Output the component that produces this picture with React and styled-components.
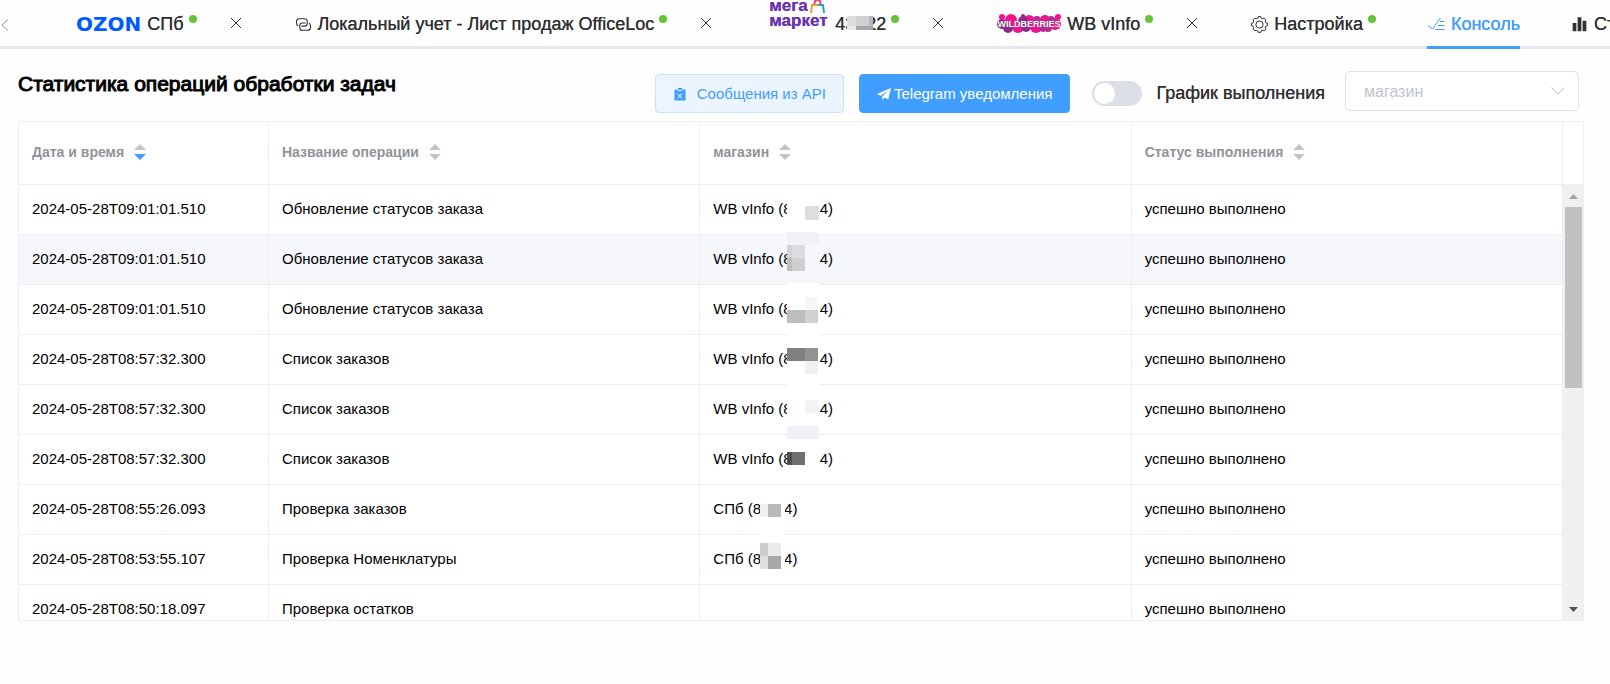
import React from 'react';
import styled, { createGlobalStyle, css } from 'styled-components';

const GlobalStyle = createGlobalStyle`
  *, *::before, *::after { box-sizing: border-box; }
  body {
    margin: 0;
    background: #fefefe;
    color: #000;
    font-family: "Liberation Sans", Arial, sans-serif;
    font-size: 15px;
    overflow-x: hidden;
  }
  button, input, select { font: inherit; }
`;

/* ---------- tabs ---------- */

const TabStrip = styled.nav`
  display: flex;
  align-items: stretch;
  height: 49px;
  background: linear-gradient(to top, #e4e7ed 3px, transparent 3px);
  overflow: hidden;
`;

const ScrollButton = styled.button`
  flex: none;
  display: flex;
  align-items: center;
  width: 25px;
  padding: 0 0 0 1px;
  border: 0;
  background: none;
  color: #909399;
`;

const TabList = styled.div`
  display: flex;
  flex: none;
  gap: 51px;
  padding-left: 51px;
`;

const Tab = styled.div`
  display: flex;
  flex: none;
  align-items: center;
  gap: 31px;
  height: 46px;
`;

const ActiveTab = styled(Tab)`
  height: 49px;
  align-items: flex-start;
  border-bottom: 3px solid #409eff;
`;

const TabButton = styled.button`
  position: relative;
  display: flex;
  align-items: center;
  gap: 6px;
  height: 46px;
  padding: 2px 0 0;
  border: 0;
  background: none;
  color: ${(p) => (p.$active ? '#409eff' : '#303133')};
  font-size: 18px;
  line-height: 24px;
  white-space: nowrap;
  text-shadow: 0 0 0 currentColor;
`;

const StatusDot = styled.span`
  width: 8px;
  height: 8px;
  margin-bottom: 10px;
  margin-left: -1px;
  border-radius: 50%;
  background: #67c23a;
`;

const CloseButton = styled.button`
  display: flex;
  justify-content: center;
  width: 16px;
  padding: 0;
  border: 0;
  background: none;
  color: #303133;
`;

const OzonLogo = styled.span`
  color: #005bff;
  font-family: "DejaVu Sans", sans-serif;
  font-size: 20px;
  font-weight: 700;
  line-height: 24px;
  text-shadow: none;
`;

const MegaLogo = styled.span`
  position: relative;
  align-self: flex-start;
  display: flex;
  flex-direction: column;
  width: 60px;
  margin-left: 4px;
  margin-top: -4px;
  color: #6a33b0;
  font-size: 17px;
  font-weight: 700;
  line-height: 15px;
  text-align: left;
`;

const MegaBag = styled.svg`
  position: absolute;
  top: 2px;
  left: 41px;
`;

/* ---------- toolbar ---------- */

const Content = styled.main`
  padding: 22px 26px 0 18px;
`;

const Toolbar = styled.div`
  display: flex;
  align-items: flex-start;
  min-height: 50px;
  padding-right: 5px;
`;

const Title = styled.h1`
  margin: 0;
  font-size: 21px;
  font-weight: 400;
  line-height: 26px;
  -webkit-text-stroke: 1px #000;
`;

const Actions = styled.div`
  display: flex;
  align-items: center;
  margin-left: auto;
  padding-top: 3px;
`;

const ActionButton = styled.button`
  display: flex;
  align-items: center;
  gap: ${(p) => (p.$primary ? 3 : 10)}px;
  height: 39px;
  margin-right: ${(p) => (p.$primary ? 22 : 15)}px;
  padding: 0 17px;
  border: 1px solid ${(p) => (p.$primary ? '#409eff' : '#c6e2ff')};
  border-radius: 4px;
  background: ${(p) => (p.$primary ? '#409eff' : '#ecf5ff')};
  color: ${(p) => (p.$primary ? '#fff' : '#409eff')};
  white-space: nowrap;
`;

const SwitchLabel = styled.label`
  display: flex;
  align-items: center;
  gap: 14px;
  margin-right: 20px;
  color: #303133;
  font-size: 18px;
  white-space: nowrap;
  text-shadow: 0 0 0 currentColor;
`;

const Switch = styled.input`
  appearance: none;
  width: 50px;
  height: 25px;
  margin: 0;
  padding: 2px;
  border-radius: 13px;
  background: #dcdfe6;

  &::before {
    content: "";
    display: block;
    width: 21px;
    height: 21px;
    border-radius: 50%;
    background: #fff;
  }
  &:checked { background: #409eff; }
  &:checked::before { margin-left: 25px; }
`;

const SelectBox = styled.div`
  position: relative;
  width: 234px;
`;

const Select = styled.select`
  appearance: none;
  display: block;
  width: 100%;
  height: 40px;
  padding: 0 36px 0 18px;
  border: 1px solid #dcdfe6;
  border-radius: 5px;
  background: #fff;
  color: #c0c4cc;
  font-size: 16px;
`;

const SelectArrow = styled.svg`
  position: absolute;
  top: 16px;
  right: 14px;
  pointer-events: none;
`;

/* ---------- table ---------- */

const line = '1px solid #ebeef5';

const Frame = styled.section`
  border: ${line};
  background: #fff;
`;

const Grid = styled.table`
  width: 100%;
  table-layout: fixed;
  border-collapse: separate;
  border-spacing: 0;
`;

const DateCol = styled.col`
  width: 250px;
`;

const GutterCol = styled.col`
  width: 20px;
`;

const cell = css`
  padding: 0 13px 2px;
  border-right: ${line};
  border-bottom: ${line};
  text-align: left;
  white-space: nowrap;
`;

const HeadCell = styled.th`
  ${cell}
  height: 63px;
  color: #909399;
  font-size: 14px;
  font-weight: 700;
`;

const GutterCell = styled.td`
  border-bottom: ${line};
`;

const SortButton = styled.button`
  display: flex;
  align-items: center;
  gap: 8px;
  padding: 0;
  border: 0;
  background: none;
  color: inherit;
`;

const Body = styled.div`
  display: flex;
  max-height: 435px;
  overflow: hidden;
`;

const Row = styled.tr`
  background: ${(p) => (p.$hover ? '#f5f7fa' : '#fff')};
`;

const Cell = styled.td`
  ${cell}
  height: 50px;
`;

const Value = styled.span`
  display: flex;
  align-items: center;
`;

const Mosaic = styled.svg`
  position: relative;
  flex: none;
  overflow: visible;
  margin-left: ${(p) => p.$before}px;
  margin-right: ${(p) => p.$after}px;
`;

const Scrollbar = styled.div`
  flex: none;
  display: flex;
  flex-direction: column;
  align-items: center;
  justify-content: space-between;
  width: 20px;
  height: 435px;
  padding: 9px 0 8px;
  background: #f0f0f0;
`;

const Thumb = styled.div`
  width: 17px;
  height: 181px;
  margin: 8px 0 auto;
  background: #c1c1c1;
`;

/* ---------- icons ---------- */

const Cross = () => (
  <svg width="10" height="10" viewBox="0 0 10 10" stroke="currentColor" fill="none">
    <path d="M0 0L10 10M10 0L0 10" />
  </svg>
);

const LinkIcon = () => (
  <svg width="17" height="17" viewBox="0 0 1024 1024" fill="currentColor">
    <path d="M640 384v64H448a128 128 0 0 0-128 128v128a128 128 0 0 0 128 128h320a128 128 0 0 0 128-128V576a128 128 0 0 0-64-110.848V394.88c74.56 26.368 128 97.472 128 181.056v128a192 192 0 0 1-192 192H448a192 192 0 0 1-192-192V576a192 192 0 0 1 192-192h192z" />
    <path d="M384 640v-64h192a128 128 0 0 0 128-128V320a128 128 0 0 0-128-128H256a128 128 0 0 0-128 128v128a128 128 0 0 0 64 110.848v70.272A192.064 192.064 0 0 1 64 448V320a192 192 0 0 1 192-192h320a192 192 0 0 1 192 192v128a192 192 0 0 1-192 192H384z" />
  </svg>
);

const gearOutline = (() => {
  const points = [];
  for (let i = 0; i < 8; i += 1) {
    [[-14, 6.6], [-9, 8], [9, 8], [14, 6.6]].forEach(([offset, r]) => {
      const a = ((i * 45 + offset) * Math.PI) / 180;
      points.push(`${(8.5 + r * Math.sin(a)).toFixed(2)} ${(8.5 - r * Math.cos(a)).toFixed(2)}`);
    });
  }
  return `M${points.join('L')}Z`;
})();

const GearIcon = () => (
  <svg width="17" height="17" viewBox="0 0 17 17" fill="none" stroke="currentColor" strokeLinejoin="round">
    <path d={gearOutline} />
    <circle cx="8.5" cy="8.5" r="3.6" />
  </svg>
);

const FinishedIcon = () => (
  <svg width="18" height="16" viewBox="0 0 18 16" fill="none" stroke="currentColor">
    <path d="M1 9.5L5.5 13L13.5 2M13 5.5H17M11 9.5H17.5M8 13.5H17.5" />
  </svg>
);

const BarsIcon = () => (
  <svg width="17" height="17" viewBox="0 0 1024 1024" fill="currentColor">
    <path d="M400 920V80h224v840H400zM100 920V420h224v500H100zM700 920V290h224v630H700z" />
  </svg>
);

const ClipboardIcon = () => (
  <svg width="14" height="14" viewBox="0 0 14 14">
    <path fill="#409eff" d="M1.500 2.500h3v1.600h4.600v-1.600h3.400v11h-11zM5 1h4v2H5z" />
    <path stroke="#fff" d="M4.500 6.500l4.500 5M9 6.500l-4.500 5" />
  </svg>
);

const PlaneIcon = () => (
  <svg width="14" height="14" viewBox="0 0 14 14" fill="currentColor">
    <path d="M14 1L0 7l3.700 1.700L11.500 3.500 5.300 9.400 5.400 13l2.200-2.500 3.600 1.700z" />
  </svg>
);

const Caret = ({ active }) => (
  <svg width="16" height="18" viewBox="0 0 16 18">
    <path fill="#c0c4cc" d="M8 1L14 7H2z" />
    <path fill={active ? '#409eff' : '#c0c4cc'} d="M8 17L14 11H2z" />
  </svg>
);

const WildberriesLogo = () => (
  <svg width="64" height="22" viewBox="1 0 64 22">
    <g fill="#f0148f">
      <circle cx="6" cy="4" r="3" /><circle cx="15" cy="7" r="6" /><circle cx="22" cy="14" r="6" />
      <circle cx="33" cy="8" r="6" /><circle cx="40" cy="14" r="6" /><circle cx="49" cy="7" r="5" />
      <circle cx="59" cy="11" r="6" /><circle cx="62" cy="4" r="3" />
    </g>
    <g fill="#8d2a8c">
      <circle cx="6" cy="11" r="5" /><circle cx="12" cy="15" r="5" /><circle cx="27" cy="8" r="5" />
      <circle cx="30" cy="14" r="5" /><circle cx="27" cy="3" r="2" />
    </g>
    <g fill="#b92d97">
      <circle cx="47" cy="14" r="5" /><circle cx="55" cy="8" r="5" /><circle cx="52" cy="15" r="4" />
      <circle cx="41" cy="7" r="4" />
    </g>
    <text
      x="33" y="14" fill="#fff" textAnchor="middle" fontSize="9" fontWeight="700"
      fontFamily="Liberation Sans, Arial, sans-serif"
    >
      WILDBERRIES
    </text>
  </svg>
);

/* ---------- data ---------- */

/* Every tile is [x, y, width, height, colour]; y counts from the middle of the text line. */
const MASKS = {
  a: [[0, -10, 32, 20, '#fff'], [18, -3, 14, 14, '#dedede']],
  b: [[0, -14, 32, 26, '#f5f7fa'], [0, -27, 32, 13, '#f0f2f7'], [0, -14, 5, 13, '#d0d1d5'], [5, -14, 13, 13, '#dcdde1'], [0, -1, 5, 13, '#bfbfc1'], [5, -1, 13, 13, '#cecfd1']],
  c: [[0, -26, 32, 40, '#fff'], [18, -12, 13, 13, '#f6f6f6'], [0, 1, 18, 13, '#bdbdbd'], [18, 1, 13, 13, '#d1d1d1']],
  d: [[0, -26, 32, 40, '#fff'], [0, -11, 18, 13, '#808080'], [18, -11, 13, 13, '#929292'], [18, 2, 13, 13, '#f0f0f0']],
  e: [[0, -26, 32, 40, '#fff'], [18, -9, 14, 13, '#f3f3f3']],
  f: [[0, -10, 32, 20, '#fff'], [0, -33, 32, 13, '#eff1f7'], [0, -7, 5, 13, '#4f4f4f'], [5, -7, 13, 13, '#707070']],
  g: [[0, -10, 25, 20, '#fff'], [0, -5, 8, 13, '#f0f0f0'], [8, -5, 13, 13, '#b9b9b9']],
  h: [[0, -30, 25, 40, '#fff'], [0, -16, 8, 13, '#cdcdcd'], [8, -16, 13, 13, '#ebebeb'], [0, -3, 8, 13, '#dfdfdf'], [8, -3, 13, 13, '#a9a9a9']],
  tab: [[0, -8, 9, 10, '#dcdcdc'], [9, -8, 13, 10, '#d0d0d0'], [22, -8, 4, 10, '#b9b9b9'], [0, 2, 9, 4, '#e6e6e6'], [9, 2, 17, 4, '#a8a8a8']],
};

const Mask = ({ name, width, before, after }) => (
  <Mosaic width={width} height="2" viewBox={`0 -1 ${width} 2`} $before={before} $after={after} aria-hidden="true">
    {MASKS[name].map(([x, y, w, h, fill], i) => (
      <rect key={i} x={x} y={y} width={w} height={h} fill={fill} />
    ))}
  </Mosaic>
);

const COLUMNS = ['Дата и время', 'Название операции', 'магазин', 'Статус выполнения'];

const ROWS = [
  ['2024-05-28T09:01:01.510', 'Обновление статусов заказа', 'WB vInfo (8', 'a'],
  ['2024-05-28T09:01:01.510', 'Обновление статусов заказа', 'WB vInfo (8', 'b'],
  ['2024-05-28T09:01:01.510', 'Обновление статусов заказа', 'WB vInfo (8', 'c'],
  ['2024-05-28T08:57:32.300', 'Список заказов', 'WB vInfo (8', 'd'],
  ['2024-05-28T08:57:32.300', 'Список заказов', 'WB vInfo (8', 'e'],
  ['2024-05-28T08:57:32.300', 'Список заказов', 'WB vInfo (8', 'f'],
  ['2024-05-28T08:55:26.093', 'Проверка заказов', 'СПб (8', 'g'],
  ['2024-05-28T08:53:55.107', 'Проверка Номенклатуры', 'СПб (8', 'h'],
  ['2024-05-28T08:50:18.097', 'Проверка остатков', '', ''],
];

const ShopTab = ({ children }) => (
  <Tab>
    <TabButton type="button">
      {children}
      <StatusDot />
    </TabButton>
    <CloseButton type="button" aria-label="Закрыть"><Cross /></CloseButton>
  </Tab>
);

const Columns = ({ gutter }) => (
  <colgroup>
    <DateCol />
    <col />
    <col />
    <col />
    {gutter && <GutterCol />}
  </colgroup>
);

export default function App() {
  return (
    <>
      <GlobalStyle />
      <TabStrip>
        <ScrollButton type="button" aria-label="Назад">
          <svg width="8" height="12" viewBox="0 0 8 12" fill="none" stroke="currentColor">
            <path d="M7 0.500L1 6L7 11.500" />
          </svg>
        </ScrollButton>
        <TabList>
          <ShopTab><OzonLogo>OZON</OzonLogo><span>СПб</span></ShopTab>
          <ShopTab><LinkIcon /><span>Локальный учет - Лист продаж OfficeLoc</span></ShopTab>
          <ShopTab>
            <MegaLogo>
              <span>мега</span>
              <span>маркет</span>
              <MegaBag width="15" height="14" viewBox="0 0 15 14" fill="none" strokeWidth="2">
                <path stroke="#e2457a" d="M4.500 5V3a3 3 0 0 1 6 0v2" />
                <path stroke="#f39a2b" d="M1 13L2 5h6" />
                <path stroke="#2ba6a8" d="M8 5h5l1 8" />
              </MegaBag>
            </MegaLogo>
            <Value>43<Mask name="tab" width={26} before={-8} after={-7} />22</Value>
          </ShopTab>
          <ShopTab><WildberriesLogo /><span>WB vInfo</span></ShopTab>
          <Tab>
            <TabButton type="button"><GearIcon /><span>Настройка</span><StatusDot /></TabButton>
          </Tab>
          <ActiveTab>
            <TabButton type="button" $active><FinishedIcon /><span>Консоль</span></TabButton>
          </ActiveTab>
          <Tab>
            <TabButton type="button"><BarsIcon /><span>Ст</span></TabButton>
          </Tab>
        </TabList>
      </TabStrip>

      <Content>
        <Toolbar>
          <Title>Статистика операций обработки задач</Title>
          <Actions>
            <ActionButton type="button"><ClipboardIcon />Сообщения из API</ActionButton>
            <ActionButton type="button" $primary><PlaneIcon />Telegram уведомления</ActionButton>
            <SwitchLabel>
              <Switch type="checkbox" role="switch" />
              График выполнения
            </SwitchLabel>
          </Actions>
          <SelectBox>
            <Select aria-label="магазин" defaultValue="">
              <option value="">магазин</option>
            </Select>
            <SelectArrow width="14" height="8" viewBox="0 0 14 8" fill="none" stroke="#c0c4cc">
              <path d="M0.500 0.500L7 7L13.500 0.500" />
            </SelectArrow>
          </SelectBox>
        </Toolbar>

        <Frame>
          <Grid>
            <Columns gutter />
            <thead>
              <tr>
                {COLUMNS.map((name, i) => (
                  <HeadCell key={name} scope="col">
                    <SortButton type="button">{name}<Caret active={i === 0} /></SortButton>
                  </HeadCell>
                ))}
                <GutterCell />
              </tr>
            </thead>
          </Grid>
          <Body>
            <Grid>
              <Columns />
              <tbody>
                {ROWS.map(([date, operation, shop, mask], i) => (
                  <Row key={i} $hover={i === 1}>
                    <Cell>{date}</Cell>
                    <Cell>{operation}</Cell>
                    <Cell>
                      {shop && (
                        <Value>
                          {shop}
                          {shop.startsWith('WB')
                            ? <Mask name={mask} width={32} before={-5} after={1} />
                            : <Mask name={mask} width={25} before={-1} after={-1} />}
                          4)
                        </Value>
                      )}
                    </Cell>
                    <Cell>успешно выполнено</Cell>
                  </Row>
                ))}
              </tbody>
            </Grid>
            <Scrollbar aria-hidden="true">
              <svg width="9" height="5" viewBox="0 0 9 5"><path fill="#a3a3a3" d="M0 5L4.500 0L9 5z" /></svg>
              <Thumb />
              <svg width="9" height="5" viewBox="0 0 9 5"><path fill="#505050" d="M0 0L4.500 5L9 0z" /></svg>
            </Scrollbar>
          </Body>
        </Frame>
      </Content>
    </>
  );
}
